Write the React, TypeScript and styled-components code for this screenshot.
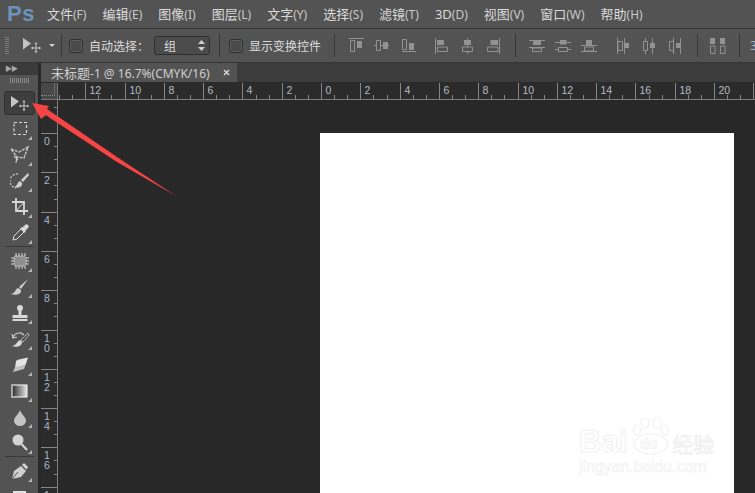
import React from 'react';
import styled, { createGlobalStyle } from 'styled-components';

const Global = createGlobalStyle`
  html, body { margin: 0; padding: 0; background: #282828; }
  * { box-sizing: border-box; }
`;

const uiFont = `"Noto Sans", "Noto Sans CJK SC", sans-serif`;

const Shell = styled.div`
  position: relative;
  width: 755px;
  height: 493px;
  overflow: hidden;
  display: flex;
  flex-direction: column;
  background: #282828;
  font-family: ${uiFont};
  color: #d6d6d6;
`;

const MenuBar = styled.div`
  height: 29px;
  flex: none;
  display: flex;
  align-items: center;
  background: #535353;
  border-bottom: 1px solid #353535;
`;

const Logo = styled.div`
  width: 47px;
  padding-left: 7px;
  font: bold 22px "Liberation Sans", sans-serif;
  color: #6b93bb;
  letter-spacing: 0.5px;
`;

const MenuItem = styled.span`
  font-size: 13px;
  line-height: 28px;
  margin-right: 16px;
  color: #dadada;
  white-space: nowrap;
  span { font-size: 12px; color: #c8c8c8; }
`;

const OptionsBar = styled.div`
  height: 34px;
  flex: none;
  display: flex;
  align-items: center;
  padding-left: 5px;
  background: #535353;
  border-bottom: 1px solid #343434;
  white-space: nowrap;
  overflow: hidden;
  svg { flex: none; }
`;

const Grip = styled.div`
  width: 4px;
  height: 18px;
  flex: none;
  margin-right: 14px;
  background: repeating-linear-gradient(#7a7a7a 0 1px, transparent 1px 2px);
`;

const OptionSep = styled.div<{ $left?: number; $right?: number }>`
  width: 1px;
  height: 23px;
  flex: none;
  background: #383838;
  margin-left: ${p => p.$left ?? 0}px;
  margin-right: ${p => p.$right ?? 0}px;
`;

const Check = styled.div`
  width: 14px;
  height: 14px;
  flex: none;
  background: #4a4a4a;
  border: 1px solid #2f2f2f;
  border-radius: 3px;
  box-shadow: inset 0 0 0 1px #5f5f5f;
`;

const OptionLabel = styled.span<{ $w: number }>`
  width: ${p => p.$w}px;
  margin-left: 6px;
  flex: none;
  font-size: 12px;
  color: #dcdcdc;
`;

const ClippedNumber = styled.span`
  flex: none;
  font-size: 12px;
  color: #9fb4c8;
`;

const Select = styled.div`
  width: 56px;
  height: 19px;
  flex: none;
  display: flex;
  align-items: center;
  justify-content: space-between;
  padding: 0 4px 0 9px;
  background: #4b4b4b;
  border: 1px solid #2e2e2e;
  border-radius: 3px;
  font-size: 12px;
  color: #dcdcdc;
`;

const Caret = styled.div`
  width: 6px;
  height: 3px;
  flex: none;
  margin: 0 6px 0 8px;
  border: 3px solid transparent;
  border-top: 3px solid #d0d0d0;
  border-bottom: 0;
`;

const AlignSlot = styled.div<{ $gap: number }>`
  width: 18px;
  height: 18px;
  flex: none;
  margin-right: ${p => p.$gap}px;
  display: flex;
`;

const Workspace = styled.div`
  flex: 1;
  min-height: 0;
  display: flex;
`;

const ToolPanel = styled.div`
  width: 38px;
  flex: none;
  display: flex;
  flex-direction: column;
  align-items: stretch;
  background: #535353;
  overflow: hidden;
`;

const PanelHead = styled.div`
  height: 12px;
  flex: none;
  background: #3b3b3b;
  color: #a8a8a8;
  font-size: 7px;
  line-height: 12px;
  padding-left: 5px;
  letter-spacing: -1px;
`;

const PanelGrip = styled.div`
  height: 5px;
  margin: 3px 9px 7px 10px;
  flex: none;
  background: repeating-linear-gradient(90deg, #8a8a8a 0 1px, transparent 1px 2px);
`;

const ToolBtn = styled.div<{ $active?: boolean }>`
  position: relative;
  flex: none;
  margin: ${p => (p.$active ? '1px 3px 1px 4px' : '0 3px 0 4px')};
  height: ${p => (p.$active ? '24px' : '26px')};
  display: flex;
  align-items: center;
  justify-content: center;
  border-radius: 3px;
  background: ${p => (p.$active ? '#3e3e3e' : 'transparent')};
  border: ${p => (p.$active ? '1px solid #2f2f2f' : '0')};
`;

const Corner = styled.i`
  position: absolute;
  right: 3px;
  bottom: 2px;
  border-left: 4px solid transparent;
  border-bottom: 4px solid #b4b4b4;
`;

const ToolSep = styled.div`
  height: 2px;
  flex: none;
  margin: 0 4px 0 5px;
  border-top: 1px solid #383838;
`;

const Doc = styled.div`
  flex: 1;
  min-width: 0;
  margin-left: 3px;
  display: flex;
  flex-direction: column;
`;

const TabBar = styled.div`
  height: 20px;
  flex: none;
  display: flex;
  background: #3c3c3c;
  border-bottom: 1px solid #2a2a2a;
`;

const Tab = styled.div`
  width: 196px;
  display: flex;
  align-items: center;
  justify-content: space-between;
  padding: 0 7px 0 10px;
  background: #535353;
  font-size: 12px;
  color: #cfcfcf;
  b { font-weight: 400; font-size: 13px; }
`;

const RulerRow = styled.div`
  height: 17px;
  flex: none;
  display: flex;
  background: #2b2b2b;
`;

const RulerCorner = styled.div`
  position: relative;
  width: 17px;
  flex: none;
  background: #484848;
  border-right: 1px solid #777;
  border-bottom: 1px solid #777;
  &::after {
    content: '';
    position: absolute;
    left: 0;
    top: 0;
    width: 13px;
    height: 12px;
    border-right: 1px dotted #8c8c8c;
    border-bottom: 1px dotted #8c8c8c;
  }
`;

const CanvasRow = styled.div`
  flex: 1;
  min-height: 0;
  display: flex;
`;

const VRuler = styled.div`
  width: 17px;
  flex: none;
  background: #2b2b2b;
`;

const Canvas = styled.div`
  flex: 1;
  display: flex;
  padding: 33px 21px 0 262px;
  background: #282828;
`;

const Page = styled.div`
  flex: 1;
  background: #fff;
`;

const Arrow = styled.svg`
  position: absolute;
  left: 0;
  top: 0;
`;

const Watermark = styled.div`
  position: absolute;
  left: 579px;
  top: 418px;
  width: 140px;
  color: #fff;
  -webkit-text-stroke: 1px #f0f0f0;
`;

const MarkTop = styled.div`
  display: flex;
  align-items: flex-end;
  height: 37px;
  font: bold 31px/27px "Liberation Sans", sans-serif;
`;

const PawGap = styled.span`
  position: relative;
  width: 43px;
  height: 37px;
  flex: none;
  margin-left: 2px;
`;

const PawIcon = styled.svg`
  position: absolute;
  left: 3px;
  top: 0;
`;

const PawText = styled.span`
  position: absolute;
  left: 11px;
  bottom: 4px;
  font: bold 14px/14px "Liberation Sans", sans-serif;
  -webkit-text-stroke: 0.6px #ececec;
`;

const MarkCjk = styled.span`
  font: 21px/24px "Noto Sans CJK SC", sans-serif;
  -webkit-text-stroke: 0.8px #eeeeee;
`;

const MarkUrl = styled.div`
  font: 15.8px/17px "Liberation Sans", sans-serif;
  margin-top: 3px;
  -webkit-text-stroke: 0.5px #eeeeee;
`;

const g = { fill: 'none', stroke: '#c8c8c8', strokeWidth: 1.2 };

const MoveIcon = () => (
  <svg width="18" height="15" viewBox="0 0 18 15">
    <path d="M0 0 V11.5 L8 5.5 Z" fill="#c4c4c4" />
    <path d="M13 5.5 V14.5 M8.5 10 H17.5" stroke="#c4c4c4" />
    <path d="M13 4 L11.5 6 H14.5 Z M13 15 L11.5 13 H14.5 Z M8 10 L10 8.5 V11.5 Z M18 10 L16 8.5 V11.5 Z" fill="#c4c4c4" />
  </svg>
);

const tools: { icon: React.ReactNode; corner?: boolean; sep?: boolean; active?: boolean }[] = [
  { icon: <MoveIcon />, active: true },
  { corner: true, icon: <svg width="16" height="16"><rect x="2" y="1.5" width="12.5" height="12" fill="none" stroke="#d8d8d8" strokeWidth="1.2" strokeDasharray="3 2" /></svg> },
  { corner: true, icon: <svg width="20" height="20"><path d="M1 4 L9 7 L18 2 L14 13 L7 12 Z" {...g} strokeWidth={1.4} strokeDasharray="3 1" /><path d="M7 12 L6 18 M4 11 L8 15" {...g} /></svg> },
  { corner: true, icon: <svg width="20" height="18"><path d="M8 2 A7 7 0 1 0 6 16" fill="none" stroke="#d0d0d0" strokeWidth="1.2" strokeDasharray="2 1.5" /><path d="M18 1 L11 8 L13 10 L19 3 Z" fill="#d0d0d0" /><path d="M10 9 C7 10 8 14 4 15 C9 17 13 14 12 11 Z" fill="#d0d0d0" /></svg> },
  { corner: true, icon: <svg width="16" height="18"><path d="M4 0 V13 H16 M0 4 H12 V17" fill="none" stroke="#d8d8d8" strokeWidth="1.8" /><path d="M4 13 L12 4" stroke="#d8d8d8" /></svg> },
  { corner: true, sep: true, icon: <svg width="18" height="18"><path d="M2 16 L3 12 L10 5 L13 8 L6 15 Z" fill="none" stroke="#d8d8d8" /><path d="M9 4 L14 9 L15 6 L17 4 A2 2 0 0 0 14 1 L12 3 Z" fill="#d8d8d8" /></svg> },
  { corner: true, icon: <svg width="18" height="16"><rect x="3" y="3" width="12" height="10" rx="2" fill="#8e8e8e" stroke="#e0e0e0" strokeDasharray="1.5 1" /><path d="M5 0 V3 M8 0 V3 M11 0 V3 M14 0 V3 M5 13 V16 M8 13 V16 M11 13 V16 M14 13 V16 M0 5 H3 M0 8 H3 M0 11 H3 M15 5 H18 M15 8 H18 M15 11 H18" stroke="#d8d8d8" /></svg> },
  { corner: true, icon: <svg width="20" height="18"><path d="M18 1 L11 11 L9 9 Z" fill="#cfcfcf" /><path d="M8 10 C5 11 6 15 1 16 C6 18 12 16 11 12 Z" fill="#cfcfcf" /></svg> },
  { corner: true, icon: <svg width="18" height="18"><circle cx="9" cy="4" r="3" fill="#d8d8d8" /><rect x="7.5" y="6" width="3" height="6" fill="#d8d8d8" /><rect x="1.5" y="11" width="15" height="3" fill="#d8d8d8" /><rect x="1.5" y="15" width="15" height="2" fill="#d8d8d8" /></svg> },
  { corner: true, icon: <svg width="20" height="18"><path d="M18 3 L11 10 L13 12 L19 5 Z" fill="none" stroke="#d8d8d8" strokeDasharray="2 1" /><path d="M10 10 C7 11 7 15 2 16 C7 18 12 16 12 12 Z" fill="#d8d8d8" /><path d="M3 7 C6 2 11 2 14 5 M2 4 L3 8 L7 7" {...g} /></svg> },
  { corner: true, icon: <svg width="20" height="16"><path d="M6 4 C7 3 8 3 9 2.5 L18 0.5 L15.5 8 L5 11 Z" fill="#e4e4e4" /><path d="M5 10 L15.5 8 L14 12 L3 15 Z" fill="#c0c0c0" /></svg> },
  { corner: true, icon: <svg width="18" height="14"><defs><linearGradient id="grad"><stop offset="0" stopColor="#2a2a2a" /><stop offset="1" stopColor="#e8e8e8" /></linearGradient></defs><rect x="1" y="1" width="15" height="12" fill="url(#grad)" stroke="#e8e8e8" strokeWidth="1.2" /></svg> },
  { corner: true, icon: <svg width="14" height="17"><path d="M7 1 C6 5 1 8 1 11.5 A6 5.5 0 0 0 13 11.5 C13 8 8 5 7 1 Z" fill="#c4c4c4" /></svg> },
  { corner: true, sep: true, icon: <svg width="18" height="18"><circle cx="7" cy="6" r="5.5" fill="#d4d4d4" /><path d="M10.5 10 L16 16" stroke="#d4d4d4" strokeWidth="2.2" /></svg> },
  { corner: true, icon: <svg width="18" height="18"><path d="M1 17 L3 9 L10 4 L15 9 L10 15 Z" fill="#d0d0d0" /><path d="M1 17 L7 10" stroke="#535353" /><path d="M11 3 L13 1 L17 5 L15.5 7.5 Z" fill="#d8d8d8" /></svg> },
  { icon: <svg width="16" height="14"><rect x="1" y="1" width="13" height="3" fill="#e0e0e0" /></svg> },
];

// [lines path, outlined path, filled path] in an 18x18 box
const alignIcons: Record<string, [string, string, string]> = {
  top: ['M0 1.5 H15', 'M1.5 3.5 H5.5 V14.5 H1.5 Z', 'M8 4 H13 V11 H8 Z'],
  vcenter: ['M0 8.5 H2 M7 8.5 H9 M14 8.5 H15', 'M2.5 3.5 H6.5 V13.5 H2.5 Z', 'M9 5 H14 V12 H9 Z'],
  bottom: ['M1 14.5 H15', 'M1.5 2.5 H5.5 V12.5 H1.5 Z', 'M8 6 H13 V13 H8 Z'],
  left: ['M1.5 1 V17', 'M3.5 10 H13.5 V14.5 H3.5 Z', 'M3 3 H10 V8 H3 Z'],
  hcenter: ['M5.5 1 V3 M5.5 8 V10 M5.5 15 V17', 'M0.5 10 H10.5 V14.5 H0.5 Z', 'M2 3 H9 V8 H2 Z'],
  right: ['M12.5 1 V17', 'M0.5 10 H11 V14.5 H0.5 Z', 'M3.5 3 H11 V8 H3.5 Z'],
  dtop: ['M0 3.5 H16 M0 10.5 H16', 'M3.5 11 H12.5 V14.5 H3.5 Z', 'M4 4 H12 V8 H4 Z'],
  dvcenter: ['M0 5.5 H5 M11.5 5.5 H16 M0 12.5 H3.5 M12.5 12.5 H16', 'M3.5 10.5 H12.5 V14.5 H3.5 Z', 'M5 3 H11.5 V7.5 H5 Z'],
  dbottom: ['M0 8.5 H16 M0 14.5 H16', 'M3.5 10 H12.5 V14 H3.5 Z', 'M5 3 H11 V8 H5 Z'],
  dleft: ['M0.5 1 V17 M7.5 1 V17', 'M1 4.5 H5.5 V13.5 H1 Z', 'M8 6 H12 V11 H8 Z'],
  dhcenter: ['M2.5 1 V4 M2.5 14 V17 M9.5 1 V6 M9.5 11 V17', 'M0.5 4.5 H4.5 V13.5 H0.5 Z', 'M7 6 H12 V11 H7 Z'],
  dright: ['M4.5 1 V17 M11.5 1 V17', 'M0.5 4.5 H4.5 V13.5 H0.5 Z', 'M7 6 H11.5 V11 H7 Z'],
  spacing: ['', 'M0.5 9 H5 V16.5 H0.5 Z M10.5 9 H15 V16.5 H10.5 Z', 'M0 1 H5 V7 H0 Z M10 1 H15 V7 H10 Z'],
};

const AlignIcon = ({ name }: { name: string }) => {
  const [lines, outline, filled] = alignIcons[name];
  const c = '#929292';
  return (
    <svg width="18" height="18">
      <path d={lines} stroke={c} fill="none" />
      <path d={outline} stroke={c} fill="none" />
      <path d={filled} fill={c} />
    </svg>
  );
};

const hMajor = 39.3;
const HRuler = () => {
  const width = 697;
  const origin = 321 - 58;
  const ticks: React.ReactNode[] = [];
  for (let i = -21; i <= 40; i++) {
    const x = Math.round(origin + (i * hMajor) / 3) + 0.5;
    if (x < 0 || x > width) continue;
    const major = i % 3 === 0;
    ticks.push(<line key={i} x1={x} x2={x} y1={major ? 0 : 12} y2={16} stroke="#858585" />);
    if (major && x + 14 < width) {
      ticks.push(
        <text key={`t${i}`} x={x + 4} y={10.5} fontSize="10.5" fontFamily='"Liberation Sans", sans-serif' fill="#b4bcc4">
          {Math.abs((i / 3) * 2)}
        </text>
      );
    }
  }
  return (
    <svg width={width} height={17}>
      {ticks}
      <line x1={0} x2={width} y1={16.5} y2={16.5} stroke="#7c7c7c" />
    </svg>
  );
};

const VRulerMarks = () => {
  const origin = 33;
  const ticks: React.ReactNode[] = [];
  for (let i = -3; i <= 32; i++) {
    const y = Math.round(origin + (i * hMajor) / 3) + 0.5;
    const major = i % 3 === 0;
    if (y < 0 || y > 393) continue;
    ticks.push(<line key={i} y1={y} y2={y} x1={major ? 0 : 13} x2={16} stroke="#858585" />);
    if (major && i >= 0) {
      const digits = String((i / 3) * 2).split('');
      ticks.push(
        <text key={`t${i}`} y={y + 11} fontSize="10.5" fontFamily='"Liberation Sans", sans-serif' fill="#a8b8c8">
          {digits.map((d, n) => (
            <tspan key={n} x={3} dy={n === 0 ? 0 : 10}>{d}</tspan>
          ))}
        </text>
      );
    }
  }
  return (
    <svg width={17} height={393}>
      {ticks}
      <line x1={16.5} x2={16.5} y1={0} y2={393} stroke="#7c7c7c" />
    </svg>
  );
};

const menus: [string, string][] = [
  ['文件', '(F)'], ['编辑', '(E)'], ['图像', '(I)'], ['图层', '(L)'], ['文字', '(Y)'], ['选择', '(S)'],
  ['滤镜', '(T)'], ['3D', '(D)'], ['视图', '(V)'], ['窗口', '(W)'], ['帮助', '(H)'],
];

const App: React.FC = () => {
  return <>
    <Global />
    <Shell>
      <MenuBar>
        <Logo>Ps</Logo>
        {menus.map(([a, b]) => (
          <MenuItem key={a}>{a}<span>{b}</span></MenuItem>
        ))}
      </MenuBar>
      <OptionsBar>
        <Grip />
        <MoveIcon />
        <Caret />
        <OptionSep $right={7} />
        <Check />
        <OptionLabel $w={65}>自动选择：</OptionLabel>
        <Select>
          组
          <svg width="7" height="11"><path d="M3.5 0 L7 4 H0 Z M3.5 11 L0 7 H7 Z" fill="#d0d0d0" /></svg>
        </Select>
        <OptionSep $left={9} $right={9} />
        <Check />
        <OptionLabel $w={85}>显示变换控件</OptionLabel>
        <OptionSep $right={14} />
        <AlignSlot $gap={7}><AlignIcon name="top" /></AlignSlot>
        <AlignSlot $gap={9}><AlignIcon name="vcenter" /></AlignSlot>
        <AlignSlot $gap={15}><AlignIcon name="bottom" /></AlignSlot>
        <AlignSlot $gap={10}><AlignIcon name="left" /></AlignSlot>
        <AlignSlot $gap={7}><AlignIcon name="hcenter" /></AlignSlot>
        <AlignSlot $gap={10}><AlignIcon name="right" /></AlignSlot>
        <OptionSep $right={13} />
        <AlignSlot $gap={8}><AlignIcon name="dtop" /></AlignSlot>
        <AlignSlot $gap={8}><AlignIcon name="dvcenter" /></AlignSlot>
        <AlignSlot $gap={18}><AlignIcon name="dbottom" /></AlignSlot>
        <AlignSlot $gap={8}><AlignIcon name="dleft" /></AlignSlot>
        <AlignSlot $gap={8}><AlignIcon name="dhcenter" /></AlignSlot>
        <AlignSlot $gap={10}><AlignIcon name="dright" /></AlignSlot>
        <OptionSep $right={12} />
        <AlignSlot $gap={11}><AlignIcon name="spacing" /></AlignSlot>
        <OptionSep $right={10} />
        <ClippedNumber>3</ClippedNumber>
      </OptionsBar>
      <Workspace>
        <ToolPanel>
          <PanelHead>▶▶</PanelHead>
          <PanelGrip />
          {tools.map((t, i) => (
            <React.Fragment key={i}>
              <ToolBtn $active={t.active}>
                {t.icon}
                {t.corner && <Corner />}
              </ToolBtn>
              {t.sep && <ToolSep />}
            </React.Fragment>
          ))}
        </ToolPanel>
        <Doc>
          <TabBar>
            <Tab>
              <span><b>未标题</b>-1 @ 16.7%(CMYK/16)</span>
              <svg width="7" height="7"><path d="M1 1 L6 6 M6 1 L1 6" stroke="#d8d8d8" strokeWidth="1.5" /></svg>
            </Tab>
          </TabBar>
          <RulerRow>
            <RulerCorner />
            <HRuler />
          </RulerRow>
          <CanvasRow>
            <VRuler><VRulerMarks /></VRuler>
            <Canvas><Page /></Canvas>
          </CanvasRow>
        </Doc>
      </Workspace>
      <Arrow width="755" height="493">
        <path d="M32 103 L49 106 L47 109 L117 157 L176 196 L117 162 L50 118 L46 115 L41 119 Z" fill="#f74444" />
      </Arrow>
      <Watermark>
        <MarkTop>
          Bai
          <PawGap>
            <PawIcon width="38" height="37" viewBox="0 0 38 37">
              <g fill="#fff" stroke="#f0f0f0" strokeWidth="1.2">
                <ellipse cx="19" cy="26" rx="17" ry="10" />
                <ellipse cx="5" cy="12" rx="3.5" ry="5" />
                <ellipse cx="13" cy="5" rx="4" ry="5" />
                <ellipse cx="25" cy="5" rx="4" ry="5" />
                <ellipse cx="33" cy="12" rx="3.5" ry="5" />
              </g>
            </PawIcon>
            <PawText>du</PawText>
          </PawGap>
          <MarkCjk>经验</MarkCjk>
        </MarkTop>
        <MarkUrl>jingyan.baidu.com</MarkUrl>
      </Watermark>
    </Shell>
  </>;
};

export default App;
